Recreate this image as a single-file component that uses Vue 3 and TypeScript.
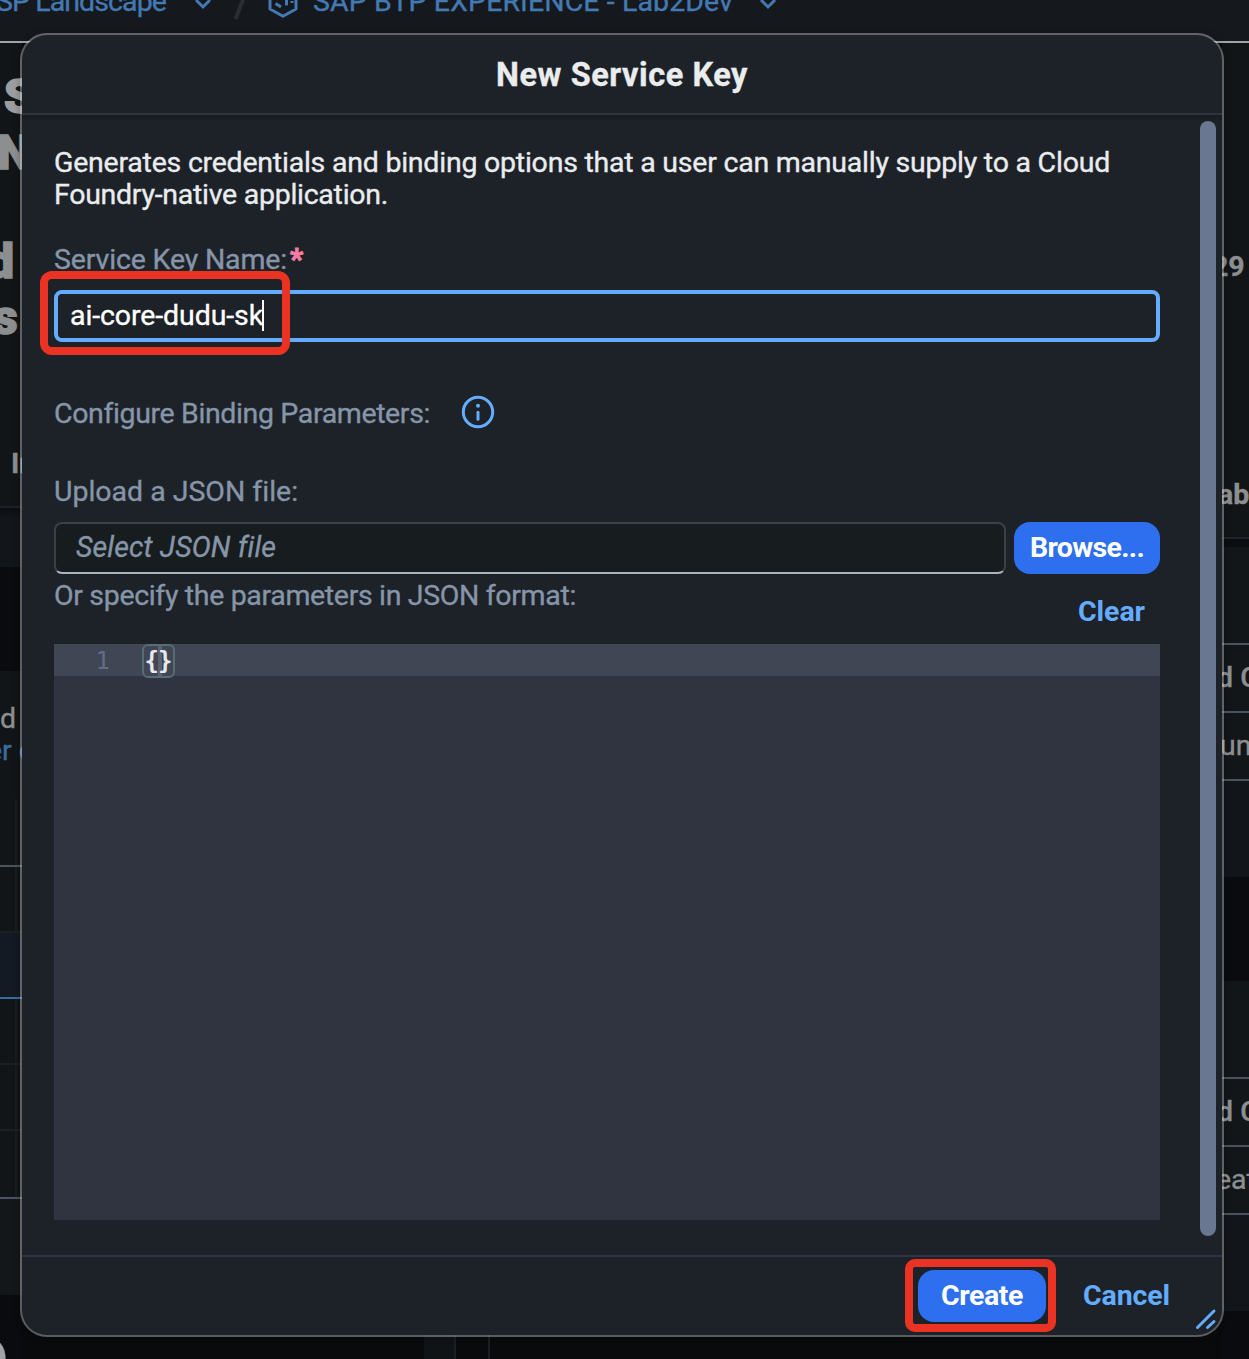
<script setup lang="ts">
import { ref } from 'vue'

const keyName = ref('ai-core-dudu-sk')
const editorLines = ref<string[]>(['{}'])

/* Spreads the letters of a text run so that it takes the given width in pixels. */
const vFit = {
  mounted(el: HTMLElement, binding: { value: number }) {
    const length = (el.textContent ?? '').length
    if (!length) return
    const natural = el.getBoundingClientRect().width
    el.style.letterSpacing = `${((binding.value - natural) / length).toFixed(3)}px`
  },
}
</script>

<template>
  <div class="screen">
    <div class="page">
      <header class="crumbs">
        <span class="crumb first"><span v-fit="170">SP Landscape</span></span>
        <svg class="chevron c1" width="20" height="20" viewBox="0 0 20 20"><path d="M3 6 L10 13 L17 6" /></svg>
        <svg class="slash" width="14" height="24" viewBox="0 0 14 24"><path d="M11.5 0 L2.5 23" /></svg>
        <svg class="cube" width="30" height="34" viewBox="0 0 30 34">
          <path d="M15 1.5 L28 9 V25 L15 32.200 L2 25 V9 Z" />
          <path d="M7.500 19.500 L13 23 M18.500 14 V21.500 M24 17 V19" />
        </svg>
        <span class="crumb next"><span v-fit="420">SAP BTP EXPERIENCE - Lab2Dev</span></span>
        <svg class="chevron c2" width="20" height="20" viewBox="0 0 20 20"><path d="M3 6 L10 13 L17 6" /></svg>
      </header>
      <div class="columns">
        <div class="left">
          <div class="hero">
            <div class="big l1">S</div>
            <div class="big l2">N</div>
            <div class="big l3">d</div>
            <div class="big l4">s</div>
            <div class="tab">In</div>
          </div>
          <div class="strip"></div>
          <div class="gap"></div>
          <div class="info">
            <div class="line grey">d</div>
            <div class="line blue">er c</div>
          </div>
          <div class="rows">
            <div class="row head"></div>
            <div class="row faint"></div>
            <div class="row picked"></div>
            <div class="row faint"></div>
            <div class="row faint"></div>
            <div class="row last"></div>
          </div>
          <div class="rest"></div>
          <div class="below"><span class="round">O</span></div>
        </div>
        <div class="middle">
          <div class="pane"></div>
          <div class="pane2"></div>
        </div>
        <div class="right">
          <div class="meta">
            <div class="num">29</div>
            <div class="lab">ab</div>
          </div>
          <div class="shade"></div>
          <div class="cell top"></div>
          <div class="cell bold">d Cr</div>
          <div class="cell">un</div>
          <div class="tail"></div>
          <div class="gap2"></div>
          <div class="cell top"></div>
          <div class="cell bold">d Cr</div>
          <div class="cell word">eat</div>
          <div class="tail"></div>
        </div>
      </div>
    </div>

    <section class="dialog">
      <header class="title"><span v-fit="252">New Service Key</span></header>
      <div class="body">
        <p class="desc">
          <span v-fit="1056">Generates credentials and binding options that a user can manually supply to a Cloud</span><br />
          <span v-fit="334">Foundry-native application.</span>
        </p>
        <label class="label name"><span v-fit="233">Service Key Name:</span><b>*</b></label>
        <div class="field focused">
          <span v-fit="193">{{ keyName }}</span><i class="caret"></i>
          <div class="mark mark-name"></div>
        </div>
        <div class="label params">
          <span v-fit="375">Configure Binding Parameters:</span>
          <svg width="34" height="34" viewBox="0 0 34 34">
            <circle cx="17" cy="17" r="14.700" />
            <path d="M17 17.300 V24.200" />
            <circle class="dot" cx="17" cy="10.700" r="2" />
          </svg>
        </div>
        <div class="label upload"><span v-fit="243">Upload a JSON file:</span></div>
        <div class="picker">
          <div class="file"><span v-fit="199">Select JSON file</span></div>
          <button class="btn browse"><span v-fit="114">Browse...</span></button>
        </div>
        <div class="json-head">
          <span class="label"><span v-fit="522">Or specify the parameters in JSON format:</span></span>
          <span class="clear"><span v-fit="67">Clear</span></span>
        </div>
        <div class="editor">
          <div v-for="(line, i) in editorLines" :key="i" class="code-line">
            <span class="gutter">{{ i + 1 }}</span>
            <span class="brackets">{{ line }}</span>
          </div>
        </div>
        <div class="scrollbar"></div>
      </div>
      <footer class="foot">
        <div class="create-wrap">
          <button class="btn create"><span v-fit="82">Create</span></button>
          <div class="mark mark-create"></div>
        </div>
        <span class="cancel"><span v-fit="87">Cancel</span></span>
        <svg class="grip" width="22" height="22" viewBox="0 0 22 22"><path d="M2.500 19.500 L19 3 M12.500 19.500 L19 13.500" /></svg>
      </footer>
    </section>
  </div>
</template>

<style>
body {
  background: #0a0c0f;
}
</style>

<style scoped>
* {
  box-sizing: border-box;
}
.screen {
  position: relative;
  width: 1249px;
  height: 1359px;
  overflow: hidden;
  font-family: Roboto, "Liberation Sans", sans-serif;
  font-size: 28.5px;
  line-height: 32px;
  background: #0a0c0f;
  -webkit-text-stroke-width: 0.35px;
}
span {
  white-space: nowrap;
}

/* page behind the dialog */
.page {
  display: flex;
  flex-direction: column;
  height: 100%;
}
.crumbs {
  display: flex;
  align-items: flex-start;
  flex: none;
  height: 43px;
  border-bottom: 2px solid #a2a5a8;
  background: #15191e;
  color: #4479b3;
}
.crumb {
  margin-top: -14px;
}
.crumb.first {
  width: 193px;
  margin-left: -4px;
}
.chevron {
  margin-top: -6px;
  fill: none;
  stroke: #4479b3;
  stroke-width: 3;
}
.c1 {
  margin-left: 4px;
}
.slash {
  margin: -4px 0 0 20px;
  fill: none;
  stroke: #282e36;
  stroke-width: 4;
}
.cube {
  margin: -16px 0 0 21px;
  fill: none;
  stroke: #4479b3;
  stroke-width: 3;
  stroke-linejoin: round;
}
.crumb.next {
  margin-left: 15px;
}
.c2 {
  margin-left: 25px;
}
.columns {
  display: flex;
  flex: 1;
  min-height: 0;
}
.left {
  display: flex;
  flex-direction: column;
  width: 22px;
  overflow: hidden;
  color: #8d8e8f;
  background: #111518;
}
.hero {
  height: 465px;
  flex: none;
  padding-top: 26px;
  border-bottom: 2px solid #1c2127;
  white-space: nowrap;
}
.big {
  font-size: 48px;
  font-weight: 900;
  line-height: 56px;
  height: 56px;
  -webkit-text-stroke-width: 1.6px;
}
.l1 {
  margin-left: 4px;
  color: #9c9d9e;
}
.l2 {
  margin-left: -3px;
}
.l3 {
  margin: 53px 0 0 -13px;
}
.l4 {
  margin-left: -7px;
}
.tab {
  margin: 102px 0 0 11px;
  font-weight: 700;
}
.strip {
  flex: none;
  height: 59px;
  background: linear-gradient(#0c0e11, #12161a 10px);
}
.gap {
  flex: none;
  height: 104px;
  background: #090b0e;
}
.info {
  flex: none;
  height: 128px;
  padding-top: 32px;
  white-space: nowrap;
}
.blue {
  color: #3d6da0;
  margin-left: -13px;
}
.rows {
  flex: none;
  background: linear-gradient(#1a1d22, #1a1d22) 15px 0 / 2px 100% no-repeat;
}
.row {
  height: 66px;
  border-bottom: 2px solid #1c2024;
}
.row.head {
  height: 68px;
  border-color: #4b545f;
}
.row.picked {
  background: #131a23;
  border-color: #3a6aa2;
}
.row.last {
  height: 68px;
  border-color: #4b5463;
}
.rest {
  flex: none;
  height: 96px;
  background: #13171a;
}
.below {
  flex: 1;
  background: #090b0e;
}
.round {
  display: block;
  margin: 33px 0 0 -31px;
  font-size: 56px;
  font-weight: 700;
  line-height: 64px;
  color: #a2a3a4;
}
.middle {
  display: flex;
  align-items: flex-end;
  width: 1200px;
  background: #090a0c;
}
.pane {
  width: 32px;
  height: 30px;
  margin-left: 402px;
  background: #101316;
  border-right: 2px solid #1b1e22;
}
.pane2 {
  width: 34px;
  height: 30px;
  border-right: 2px solid #1b1e22;
}
.right {
  display: flex;
  flex-direction: column;
  flex: 1;
  overflow: hidden;
  color: #8d8e8f;
  background: #090b0e;
  white-space: nowrap;
}
.right > div {
  flex: none;
}
.meta {
  height: 496px;
  padding-top: 208px;
  background: #111518;
  border-bottom: 2px solid #20252b;
  font-weight: 700;
}
.num {
  margin-left: -10px;
}
.lab {
  margin: 196px 0 0 -4px;
}
.shade {
  height: 8px;
  background: #0b0d10;
}
.cell {
  height: 68px;
  padding-top: 17px;
  background: #121619;
  border-bottom: 2px solid #4a5460;
  text-indent: -2px;
}
.cell.bold {
  font-weight: 500;
  text-indent: -5px;
}
.cell.word {
  text-indent: -6px;
}
.cell.top {
  height: 98px;
}
.tail {
  height: 96px;
  background: #12161a;
}
.gap2 {
  height: 104px;
}

/* dialog */
.dialog {
  position: absolute;
  left: 22px;
  top: 35px;
  display: flex;
  flex-direction: column;
  width: 1200px;
  height: 1300px;
  border-radius: 25px;
  background: #1d2228;
  box-shadow: 0 0 0 2px rgba(255, 255, 255, 0.34), 0 0 8px rgba(0, 0, 0, 0.4);
  color: #eaecee;
}
.title {
  flex: none;
  height: 80px;
  border-bottom: 2px solid #2f3442;
  text-align: center;
  font-size: 32.500px;
  font-weight: 700;
  line-height: 81px;
}
.body {
  position: relative;
  flex: 1;
  padding: 32px 62px 0 32px;
  background: linear-gradient(#181c20, #1d2228 7px);
}
.desc {
  margin: 0;
}
.label {
  display: flex;
  color: #8695a8;
}
.name {
  margin-top: 33px;
}
.name b {
  width: 16px;
  margin: -1px 0 1px 3px;
  font-size: 29px;
  color: #fa7ca5;
  -webkit-text-stroke-width: 1px;
}
.field {
  position: relative;
  display: flex;
  height: 52px;
  margin-top: 14px;
  padding: 6px 12px;
  border: 4px solid #64acff;
  border-radius: 8px;
  color: #fff;
}
.caret {
  width: 2px;
  height: 31px;
  margin-left: -1px;
  background: #fff;
}
.mark {
  position: absolute;
  border: 8px solid #ea3323;
  border-radius: 12px;
}
.mark-name {
  left: -18px;
  top: -23px;
  width: 250px;
  height: 84px;
}
.params {
  margin-top: 56px;
}
.params svg {
  margin: -3px 0 -1px 31px;
  fill: none;
  stroke: #64acff;
  stroke-width: 3;
  stroke-linecap: round;
}
.params .dot {
  fill: #64acff;
  stroke: none;
}
.upload {
  margin-top: 46px;
}
.picker {
  display: flex;
  gap: 8px;
  margin-top: 14px;
}
.file {
  flex: 1;
  height: 52px;
  padding: 8px 20px;
  border: 2px solid #3a4047;
  border-bottom-color: #a9b4be;
  border-radius: 8px;
  background: #171c1f;
  color: #8695a8;
  font-style: italic;
}
.btn {
  display: flex;
  justify-content: center;
  align-items: center;
  height: 52px;
  padding: 0;
  border: 0;
  border-radius: 16px;
  background: #2d6fee;
  color: #fff;
  font: inherit;
  font-weight: 700;
}
.browse {
  width: 146px;
}
.json-head {
  display: flex;
  justify-content: space-between;
  height: 70px;
  padding: 6px 15px 0 0;
}
.clear,
.cancel {
  font-weight: 700;
  color: #64acff;
}
.btn,
.clear,
.cancel {
  -webkit-text-stroke-width: 0;
}
.clear {
  margin-top: 16px;
}
.editor {
  height: 576px;
  background: #303440;
  font-family: "DejaVu Sans Mono", monospace;
  font-size: 24px;
  -webkit-text-stroke-width: 0;
}
.code-line {
  display: flex;
  height: 32px;
  background: #414655;
}
.gutter {
  width: 56px;
  padding-top: 1px;
  text-align: right;
  color: #606c8c;
}
.brackets {
  width: 33px;
  height: 34px;
  margin-left: 32px;
  border: 2px solid #566c77;
  border-radius: 6px;
  background: linear-gradient(#5b606d, #5b606d) 14px 0 / 4px 100% no-repeat;
  color: #e6e9ee;
  font-weight: 700;
  line-height: 31px;
  text-align: center;
  letter-spacing: -1px;
  text-indent: -1px;
}
.scrollbar {
  position: absolute;
  right: 6px;
  top: 6px;
  width: 16px;
  height: 1115px;
  border-radius: 8px;
  background: #6a7791;
}
.foot {
  position: relative;
  display: flex;
  align-items: center;
  justify-content: flex-end;
  flex: none;
  height: 80px;
  padding: 0 52px 0 0;
  border-top: 2px solid #2f3542;
}
.create-wrap {
  position: relative;
  margin-right: 37px;
}
.create {
  width: 128px;
}
.mark-create {
  left: -13px;
  top: -11px;
  width: 151px;
  height: 73px;
  border-radius: 10px;
}
.grip {
  position: absolute;
  right: 5px;
  bottom: 5px;
  fill: none;
  stroke: #64acff;
  stroke-width: 3;
  stroke-linecap: round;
}
</style>
